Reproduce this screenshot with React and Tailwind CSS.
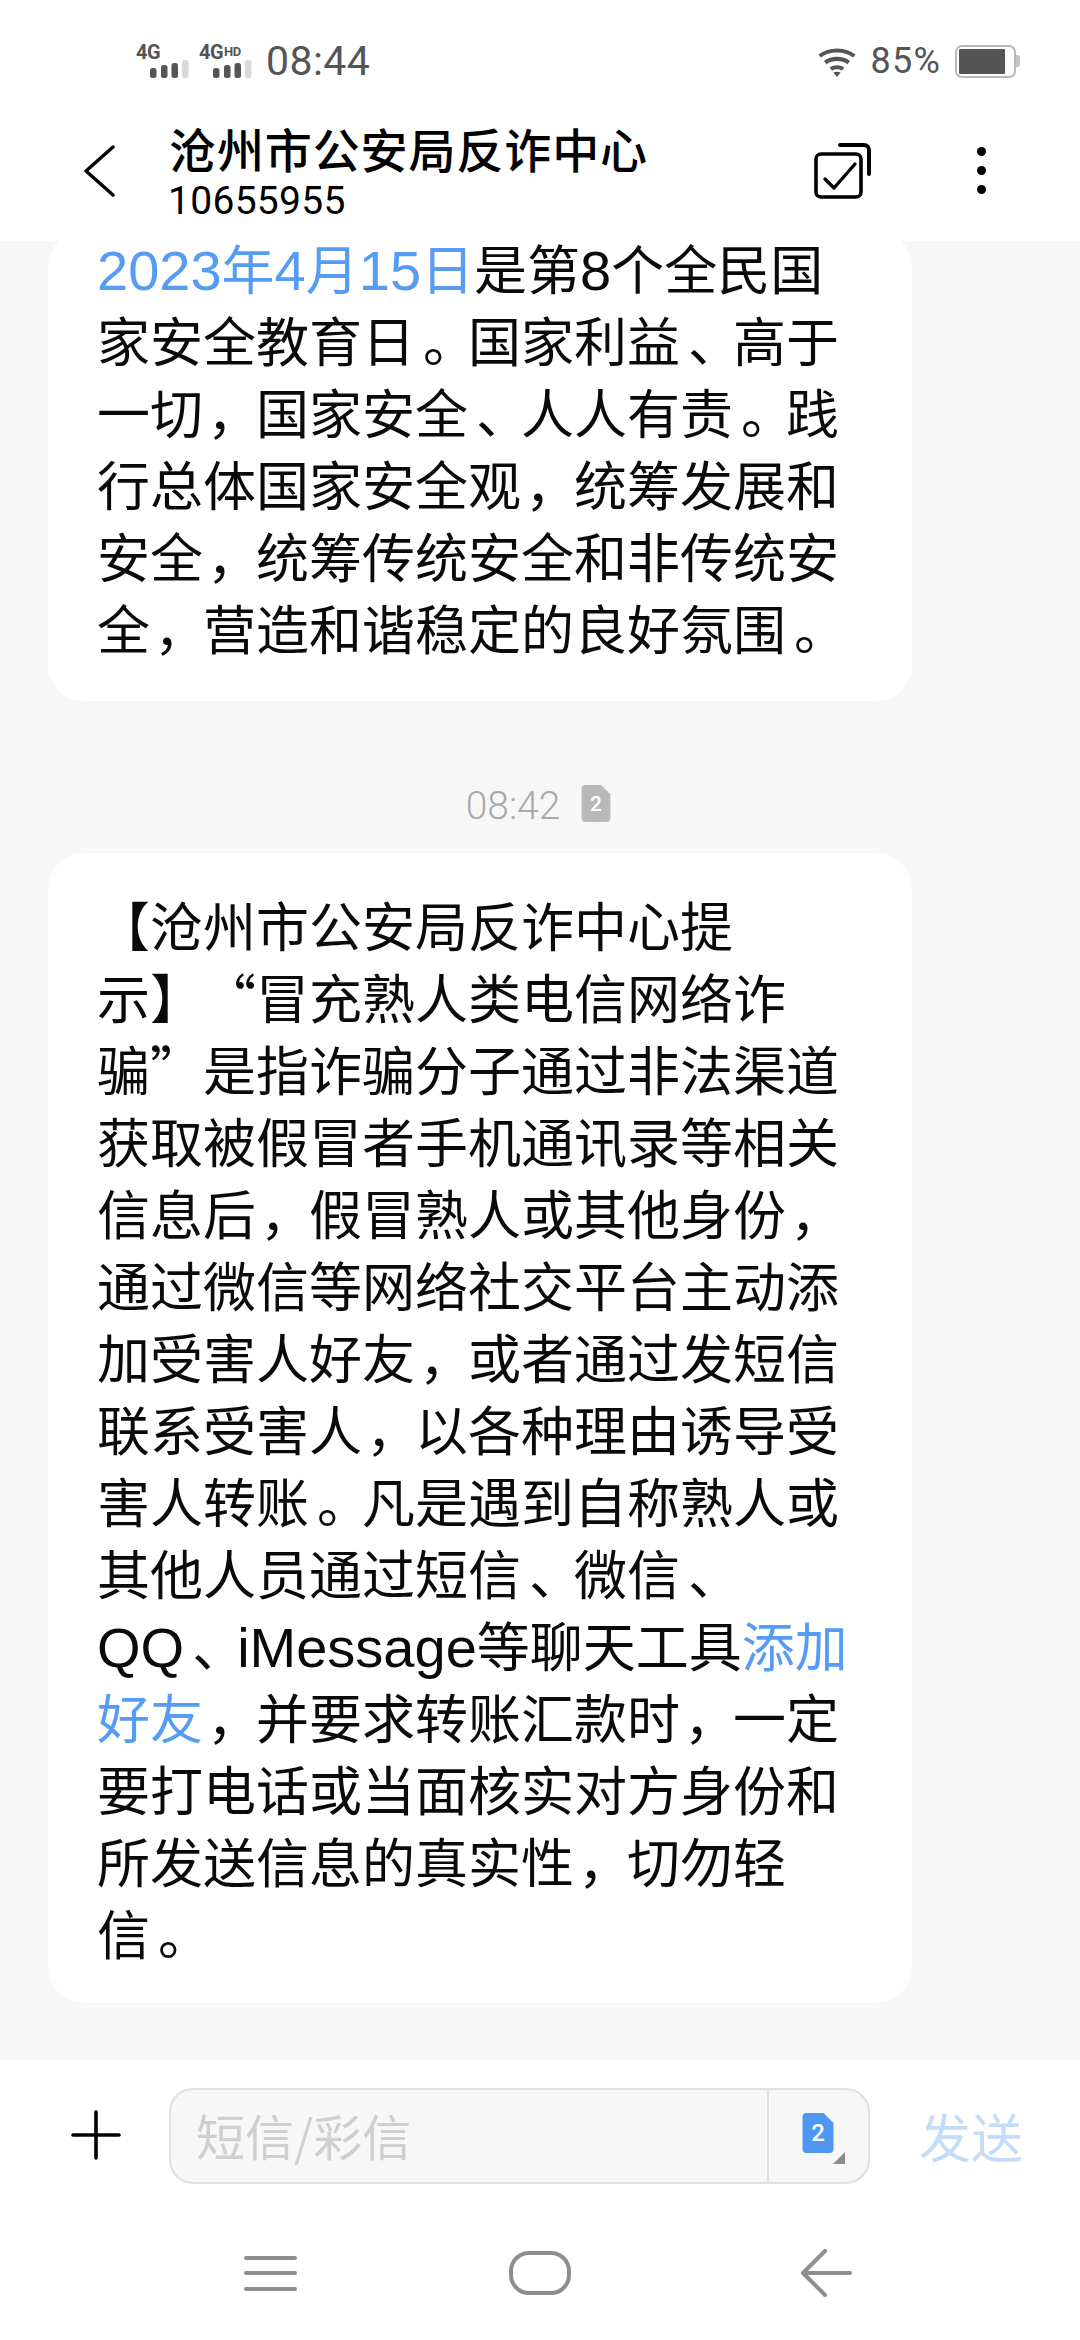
const CJK = "font-['Noto_Sans_CJK_SC','Noto_Sans',sans-serif]";
const LINK = "text-[#569cf4]";

function L({ children }) {
  return <span className="font-['Liberation_Sans',sans-serif] text-[56px]">{children}</span>;
}
function P({ children }) {
  const shift = children === "，" ? "translate-x-[4px]" : "translate-x-[8px]";
  return <span className={`inline-block ${shift}`}>{children}</span>;
}

function Signal({ sup }) {
  return (
    <div className="relative w-[53px] h-[33px]">
      <span className="absolute left-0 top-[-3px] font-['Roboto',sans-serif] font-bold text-[20px] leading-[20px] text-[#555] tracking-[-0.5px] whitespace-nowrap">
        4G
        {sup && <span className="text-[13px] align-[3px] ml-[1px]">{sup}</span>}
      </span>
      <svg className="absolute left-0 top-0" width="53" height="33" viewBox="0 0 53 33">
        <rect x="14" y="23" width="6.5" height="10" rx="2.5" fill="#555" />
        <rect x="25" y="20" width="6.5" height="13" rx="2.5" fill="#555" />
        <rect x="35.5" y="18" width="6.5" height="15" rx="2.5" fill="#555" />
        <rect x="46" y="15" width="6.5" height="18" rx="2.5" fill="#d9d9d9" />
      </svg>
    </div>
  );
}

function Wifi() {
  return (
    <svg width="40" height="32" viewBox="0 0 40 32" fill="none">
      <path d="M1.5 9.5C11.5 1.5 28.5 1.5 38.5 9.5l-2.4 3C27.5 5.9 12.5 5.9 3.9 12.5z" fill="#555" />
      <path d="M7 16C14 10.4 26 10.4 33 16l-2.6 3.2C25 15 15 15 9.6 19.2z" fill="#555" />
      <path d="M12.6 22.6C17 19.4 23 19.4 27.4 22.6l-2.6 3.1C22 23.8 18 23.8 15.2 25.7z" fill="#555" />
      <path d="M16.4 27.6C18.6 26.4 21.4 26.4 23.6 27.6L20 32z" fill="#555" />
    </svg>
  );
}

function Battery() {
  return (
    <div className="flex items-center">
      <div className="w-[61px] h-[33px] rounded-[7px] border-[2px] border-[#b8b8b8] p-[2px] flex">
        <div className="w-[46px] h-full bg-[#555] rounded-[1px]" />
      </div>
      <div className="w-[4px] h-[12px] bg-[#c4c4c4] rounded-r-[2px]" />
    </div>
  );
}

function StatusBar() {
  return (
    <div className="h-[100px] flex items-start justify-between">
      <div className="flex items-center mt-[43px] ml-[136px]">
        <Signal />
        <div className="ml-[10px]"><Signal sup="HD" /></div>
        <span className="ml-[14px] font-['Roboto',sans-serif] text-[41px] leading-[36px] text-[#555] tracking-[0.4px]">08:44</span>
      </div>
      <div className="flex items-center mt-[43px] mr-[60px]">
        <Wifi />
        <span className="ml-[14px] font-['Roboto',sans-serif] text-[36px] leading-[36px] text-[#555] tracking-[1.2px]">85%</span>
        <div className="ml-[14px]"><Battery /></div>
      </div>
    </div>
  );
}

function Header() {
  return (
    <div className="relative z-10 h-[241px] bg-white shrink-0">
      <StatusBar />
      <div className="flex items-start">
        <svg className="ml-[83px] mt-[44px] shrink-0" width="32" height="54" viewBox="0 0 32 54" fill="none">
          <path d="M30 3L3 27l27 24" stroke="#000" strokeWidth="3.4" strokeLinecap="round" strokeLinejoin="round" />
        </svg>
        <div className="ml-[54px] flex-1">
          <div className={`${CJK} text-[47px] leading-[58px] text-black tracking-[0.9px] font-medium mt-[19px]`}>沧州市公安局反诈中心</div>
          <div className="font-['Roboto',sans-serif] text-[39px] leading-[42px] text-black tracking-[0.3px] mt-[3px] -ml-[1px]">10655955</div>
        </div>
        <svg className="mt-[43px] shrink-0" width="57" height="56" viewBox="0 0 57 56" fill="none">
          <rect x="2" y="11" width="45" height="43" rx="5" stroke="#000" strokeWidth="3.6" />
          <path d="M26 2h24a5 5 0 0 1 5 5v24" stroke="#000" strokeWidth="4" strokeLinecap="round" />
          <path d="M11 36l9 9 21-24" stroke="#000" strokeWidth="3.4" strokeLinecap="round" strokeLinejoin="round" />
        </svg>
        <div className="ml-[106px] mr-[94px] mt-[47px] flex flex-col gap-[10px] items-center">
          <div className="w-[9px] h-[9px] rounded-full bg-black" />
          <div className="w-[9px] h-[9px] rounded-full bg-black" />
          <div className="w-[9px] h-[9px] rounded-full bg-black" />
        </div>
      </div>
    </div>
  );
}

function Line({ children }) {
  return <div className="whitespace-nowrap h-[72px] [text-spacing-trim:space-all]">{children}</div>;
}

function Bubble({ children, className }) {
  return (
    <div className={`w-[864px] ml-[48px] bg-white rounded-[36px] pl-[49px] ${CJK} text-[53px] leading-[72px] text-[#0a0a0a] ${className}`}>
      {children}
    </div>
  );
}

function SimBadge({ color, text, w, h, size }) {
  return (
    <svg width={w} height={h} viewBox="0 0 31 40">
      <path d="M4 0h17l10 10v26a4 4 0 0 1-4 4H4a4 4 0 0 1-4-4V4a4 4 0 0 1 4-4z" fill={color} />
      <text x="15.5" y="28" textAnchor="middle" fontSize={size} fontWeight="500" fill={text} fontFamily="Roboto, sans-serif">2</text>
    </svg>
  );
}

function Chat() {
  return (
    <div className="flex-1 bg-[#f7f7f7] overflow-hidden">
      <Bubble className="-mt-[10px] pb-[38px]">
        <Line><span className={LINK}><L>2023</L>年<L>4</L>月<L>15</L>日</span>是第<L>8</L>个全民国</Line>
        <Line>家安全教育日<P>。</P>国家利益<P>、</P>高于</Line>
        <Line>一切<P>，</P>国家安全<P>、</P>人人有责<P>。</P>践</Line>
        <Line>行总体国家安全观<P>，</P>统筹发展和</Line>
        <Line>安全<P>，</P>统筹传统安全和非传统安</Line>
        <Line>全<P>，</P>营造和谐稳定的良好氛围<P>。</P></Line>
      </Bubble>
      <div className="h-[152px] pt-[85px] flex items-start justify-center">
        <span className="font-['Roboto',sans-serif] font-light text-[39px] leading-[40px] text-[#a9a9a9] -ml-[3px]">08:42</span>
        <span className="ml-[21px] -mt-[1px] flex"><SimBadge color="#b9b9b9" text="#fff" w={30} h={37} size={22} /></span>
      </div>
      <Bubble className="pt-[35px] pb-[35px]">
        <Line>【沧州市公安局反诈中心提</Line>
        <Line>示】“冒充熟人类电信网络诈</Line>
        <Line>骗”是指诈骗分子通过非法渠道</Line>
        <Line>获取被假冒者手机通讯录等相关</Line>
        <Line>信息后<P>，</P>假冒熟人或其他身份<P>，</P></Line>
        <Line>通过微信等网络社交平台主动添</Line>
        <Line>加受害人好友<P>，</P>或者通过发短信</Line>
        <Line>联系受害人<P>，</P>以各种理由诱导受</Line>
        <Line>害人转账<P>。</P>凡是遇到自称熟人或</Line>
        <Line>其他人员通过短信<P>、</P>微信<P>、</P></Line>
        <Line><L>QQ</L><P>、</P><L>iMessage</L>等聊天工具<span className={LINK}>添加</span></Line>
        <Line><span className={LINK}>好友</span><P>，</P>并要求转账汇款时<P>，</P>一定</Line>
        <Line>要打电话或当面核实对方身份和</Line>
        <Line>所发送信息的真实性<P>，</P>切勿轻</Line>
        <Line>信<P>。</P></Line>
      </Bubble>
    </div>
  );
}

function Composer() {
  return (
    <div className="h-[280px] bg-white shrink-0">
      <div className="flex items-start pt-[28px]">
        <svg className="ml-[71px] mt-[22px] shrink-0" width="50" height="50" viewBox="0 0 50 50" fill="none">
          <path d="M25 2v46M2 25h46" stroke="#000" strokeWidth="3.6" strokeLinecap="round" />
        </svg>
        <div className="ml-[48px] w-[701px] h-[96px] rounded-[24px] border-[2px] border-[#e0e0e0] bg-[#f7f7f7] flex">
          <div className={`flex-1 pl-[25px] ${CJK} text-[49px] leading-[90px] text-[#cfcfcf]`}>短信/彩信</div>
          <div className="relative w-[101px] border-l-[2px] border-[#e0e0e0]">
            <div className="absolute left-[33px] top-[23px] flex"><SimBadge color="#4f97f2" text="#fff" w={32} h={40} size={24} /></div>
            <svg className="absolute left-[64px] top-[62px]" width="12" height="12" viewBox="0 0 12 12">
              <path d="M12 0v12H0z" fill="#8a8a8a" />
            </svg>
          </div>
        </div>
        <div className={`ml-[49px] ${CJK} text-[52px] leading-[96px] text-[#c3dcfb]`}>发送</div>
      </div>
      <div className="flex items-center mt-[65px] h-[48px]">
        <div className="ml-[244px] w-[53px] flex flex-col gap-[11.5px]">
          <div className="h-[4px] rounded-full bg-[#8e8e8e]" />
          <div className="h-[4px] rounded-full bg-[#8e8e8e]" />
          <div className="h-[4px] rounded-full bg-[#8e8e8e]" />
        </div>
        <div className="ml-[212px] w-[62px] h-[44px] rounded-[20px] border-[4px] border-[#8e8e8e]" />
        <svg className="ml-[229px]" width="52" height="48" viewBox="0 0 52 48" fill="none">
          <path d="M25 2L3 24l22 22M3 24h47" stroke="#8e8e8e" strokeWidth="4" strokeLinecap="round" strokeLinejoin="round" />
        </svg>
      </div>
    </div>
  );
}

export default function App() {
  return (
    <div className="w-[1080px] h-[2340px] flex flex-col overflow-hidden bg-white">
      <Header />
      <Chat />
      <Composer />
    </div>
  );
}
